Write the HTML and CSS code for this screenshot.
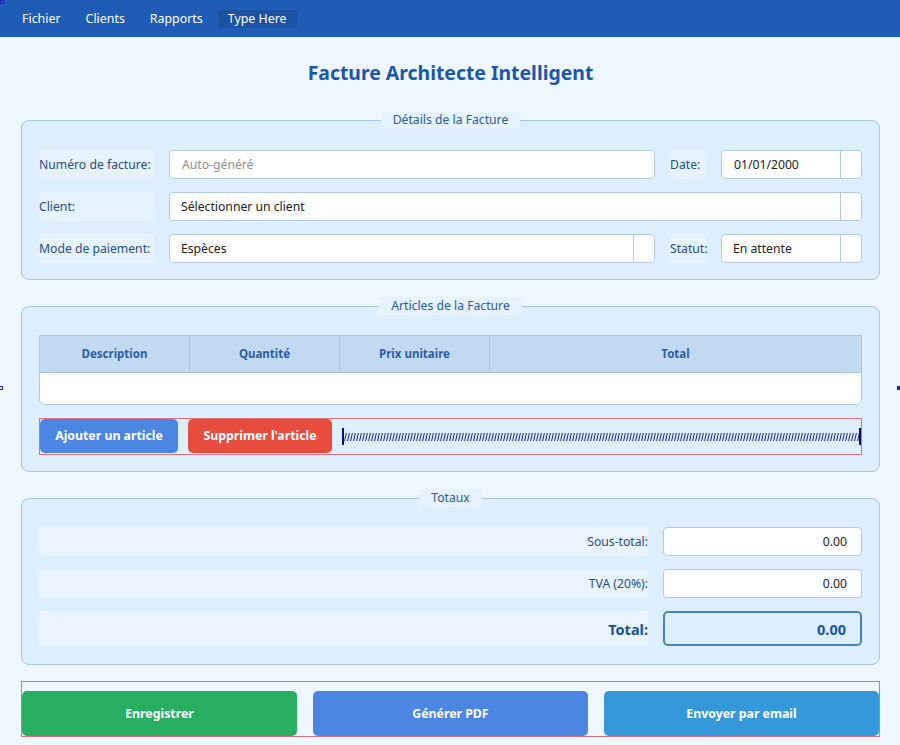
FILE: index.html
```html
<!DOCTYPE html>
<html lang="fr">
<head>
<meta charset="utf-8">
<title>Facture Architecte Intelligent</title>
<link rel="stylesheet" href="styles.css">
</head>
<body>
<span class="marker marker-tl"></span>
<span class="marker marker-l"></span>
<span class="marker marker-r"></span>
<nav class="menubar">
  <span class="menu-item">Fichier</span>
  <span class="menu-item">Clients</span>
  <span class="menu-item">Rapports</span>
  <span class="menu-item menu-active">Type Here</span>
</nav>
<main class="main">
  <h1 class="title">Facture Architecte Intelligent</h1>

  <fieldset class="group group-details">
    <legend class="group-title">Détails de la Facture</legend>
    <div class="form-grid">
      <label class="lbl">Numéro de facture:</label>
      <div class="field placeholder">Auto-généré</div>
      <label class="lbl">Date:</label>
      <div class="field combo date">01/01/2000<span class="arrow"></span></div>

      <label class="lbl">Client:</label>
      <div class="field combo span3">Sélectionner un client<span class="arrow"></span></div>

      <label class="lbl">Mode de paiement:</label>
      <div class="field combo">Espèces<span class="arrow"></span></div>
      <label class="lbl">Statut:</label>
      <div class="field combo">En attente<span class="arrow"></span></div>
    </div>
  </fieldset>

  <fieldset class="group group-items">
    <legend class="group-title">Articles de la Facture</legend>
    <div class="table">
      <div class="thead">
        <div class="th">Description</div>
        <div class="th">Quantité</div>
        <div class="th">Prix unitaire</div>
        <div class="th th-last">Total</div>
      </div>
      <div class="tbody"></div>
    </div>
    <div class="item-actions">
      <button class="btn btn-add">Ajouter un article</button>
      <button class="btn btn-del">Supprimer l'article</button>
      <div class="spring">
        <svg class="coil" width="100%" height="8" preserveAspectRatio="none" aria-hidden="true">
          <defs>
            <pattern id="coilp" width="3" height="8" patternUnits="userSpaceOnUse">
              <path d="M0.6 8 L2.4 0" stroke="#1a1a8c" stroke-width="1" fill="none"/>
            </pattern>
          </defs>
          <rect x="0" y="0" width="100%" height="8" fill="url(#coilp)"/>
        </svg>
      </div>
    </div>
  </fieldset>

  <fieldset class="group group-totals">
    <legend class="group-title">Totaux</legend>
    <div class="totals-grid">
      <div class="t-lbl">Sous-total:</div>
      <div class="field num">0.00</div>
      <div class="t-lbl">TVA (20%):</div>
      <div class="field num">0.00</div>
      <div class="t-lbl t-total">Total:</div>
      <div class="field num total-field">0.00</div>
    </div>
  </fieldset>

  <div class="actions">
    <button class="btn big btn-save">Enregistrer</button>
    <button class="btn big btn-pdf">Générer PDF</button>
    <button class="btn big btn-mail">Envoyer par email</button>
  </div>
</main>
</body>
</html>
```

FILE: styles.css
```css
* { box-sizing: border-box; }

html, body {
  margin: 0;
  padding: 0;
}

body {
  width: 900px;
  height: 745px;
  overflow: hidden;
  background: #eef6fe;
  font-family: "Noto Sans", "Open Sans", sans-serif;
  font-size: 12.2px;
  line-height: 18px;
  color: #222;
  position: relative;
}

.marker {
  position: absolute;
  width: 4px;
  height: 4px;
  border: 1px solid #2020c0;
  z-index: 5;
}
.marker-tl { left: 0; top: 0; }
.marker-l { left: -1px; top: 386px; }
.marker-r { right: 0; top: 386px; background: #2020c0; width: 3px; }

.menubar {
  height: 37px;
  background: #1e5cb5;
  display: flex;
  align-items: center;
  padding-left: 12px;
  gap: 5px;
}

.menu-item {
  color: #ffffff;
  font-size: 12.4px;
  padding: 0 10px;
  height: 18px;
  line-height: 18px;
}

.menu-active {
  background: #1b52a3;
}

.main {
  padding: 0 20px 0 21px;
}

.title {
  margin: 0;
  height: 74px;
  line-height: 72px;
  text-align: center;
  font-size: 19.4px;
  font-weight: 700;
  color: #1b57a8;
}

.group {
  margin: 0;
  border: 1px solid #aac8e6;
  border-radius: 8px;
  background: #ddeefc;
  padding: 20px 17px 16px;
  min-width: 0;
}

.group-title {
  margin: 0 auto;
  padding: 0 12px;
  background: #e6f2fd;
  color: #2b5c9e;
  font-size: 12.2px;
  line-height: 18px;
  height: 18px;
}

.group-details { height: 169px; }
.group-items { margin-top: 17px; height: 175px; }
.group-totals { margin-top: 17px; height: 176px; }

.form-grid {
  display: grid;
  grid-template-columns: 115px 1fr 36px 141px;
  grid-auto-rows: 29px;
  column-gap: 15px;
  row-gap: 13px;
  padding-top: 1px;
}

.lbl {
  background: #e6f2fd;
  color: #2a4f86;
  display: flex;
  align-items: center;
  white-space: nowrap;
  padding-top: 1px;
}

.field {
  background: #ffffff;
  border: 1px solid #b4cbe2;
  border-radius: 4px;
  display: flex;
  align-items: center;
  padding: 0 11px;
  color: #222;
  position: relative;
  white-space: nowrap;
}

.placeholder { color: #8f8f8f; padding-left: 12px; }
.date { padding-left: 12px; }

.span3 { grid-column: 2 / 5; }

.combo { padding-right: 30px; }
.arrow {
  position: absolute;
  right: 0;
  top: 0;
  bottom: 0;
  width: 21px;
  border-left: 1px solid #b4cbe2;
}

.table {
  border: 1px solid #aac8e6;
  border-radius: 0 0 6px 6px;
  overflow: hidden;
  background: #fff;
}

.thead {
  display: grid;
  grid-template-columns: 150px 150px 150px 1fr;
  height: 37px;
  background: #c2daf1;
  border-bottom: 1px solid #aac8e6;
}

.th {
  display: flex;
  align-items: center;
  justify-content: center;
  font-weight: 700;
  font-size: 11.5px;
  color: #2b5ea8;
  border-right: 1px solid #aac8e6;
}
.th-last { border-right: none; }

.tbody { height: 31px; background: #fff; }

.item-actions {
  margin-top: 13px;
  height: 37px;
  border: 1px solid #e0707e;
  display: flex;
  align-items: stretch;
  gap: 10px;
  padding: 0 0 1px 0;
}

.btn {
  border: none;
  border-radius: 5px;
  color: #fff;
  font-family: "Noto Sans", "Open Sans", sans-serif;
  font-weight: 700;
  font-size: 12.3px;
  line-height: 18px;
  cursor: pointer;
}

.btn-add { background: #4a86e2; width: 138px; }
.btn-del { background: #e74c3c; width: 144px; }

.spring {
  flex: 1;
  margin: 9px 0 8px 0;
  border-left: 2px solid #0a0a80;
  border-right: 2px solid #0a0a80;
  display: flex;
  align-items: center;
}

.coil { display: block; }

.totals-grid {
  display: grid;
  grid-template-columns: 1fr 199px;
  grid-template-rows: 29px 29px 35px;
  column-gap: 15px;
  row-gap: 13px;
}

.t-lbl {
  background: #e9f4fe;
  color: #2a4f86;
  display: flex;
  align-items: center;
  justify-content: flex-end;
}

.t-total {
  font-weight: 700;
  font-size: 14.5px;
  color: #1b4f96;
}

.num { justify-content: flex-end; padding-right: 14px; }

.total-field {
  background: #ddeefc;
  border: 2px solid #4a80c8;
  border-radius: 5px;
  font-weight: 700;
  font-size: 14.5px;
  color: #1b57a8;
}

.actions {
  margin-top: 16px;
  height: 56px;
  border: 1px solid #e0707e;
  display: grid;
  grid-template-columns: 1fr 1fr 1fr;
  column-gap: 16px;
  padding-top: 9px;
}

.big { border-radius: 5px; }
.btn-save { background: #27ae60; }
.btn-pdf { background: #4a86e2; }
.btn-mail { background: #3498db; }
```
